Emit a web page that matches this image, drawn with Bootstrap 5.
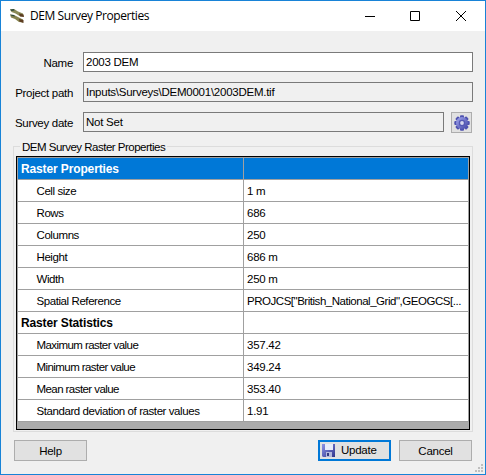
<!DOCTYPE html>
<html lang="en">
<head>
<meta charset="utf-8">
<meta name="viewport" content="width=device-width, initial-scale=1">
<title>DEM Survey Properties</title>
<link href="https://cdn.jsdelivr.net/npm/bootstrap@5.3.0/dist/css/bootstrap.min.css" rel="stylesheet">
<style>
body{font:11.5px/14px "Liberation Sans",Arial,sans-serif;color:#000;letter-spacing:-.42px;background:#f0f0f0;overflow:hidden}
.win{width:486px;height:475px;border:1px solid #1883d7;background:#f0f0f0}
.titlebar{height:30px;padding-left:8px;background:#fff}
.title-text{font:12px/16px "Open Sans",sans-serif;letter-spacing:-.43px;margin-left:5px}
.caption-btn{width:46px;height:29px}
.main-area{padding:21px 12px 0 12px}
.field-row{height:20px;margin-bottom:10px}
.field-row label{width:60px;margin-right:10px;text-align:right;padding-top:4px;letter-spacing:-.3px}
.form-control.field{height:20px;border:1px solid #7a7a7a;border-radius:0;padding:0 0 1px 2px;font-size:11.5px;line-height:14px;color:#000;background:#fff;letter-spacing:-.25px;min-width:0}
.form-control.field[readonly]{background:#f0f0f0}
.tool-btn{width:21px;height:21px;border:1px solid #adadad;background:#e1e1e1;margin:0 1px 0 7px;padding:0;border-radius:0}
.group{width:460px;height:290px;border:1px solid #dcdcdc;padding:0 2px}
.group legend{float:none;width:auto;font-size:11.5px;line-height:10px;height:9px;margin:0 0 5px 4px;padding:0 2px;color:#000;letter-spacing:-.5px}
.gridview{width:454px;height:274px;border:1px solid #000;background:#ababab}
.grid-body{border:1px solid #a0a0a0;border-bottom:0;width:452px}
.prop-row{height:22px;border-bottom:1px solid #a0a0a0;line-height:23px;background:#fff}
.prop-key{width:226px;border-right:1px solid #a0a0a0;padding-left:18.5px}
.prop-val{padding-left:3px;width:224px;white-space:nowrap;letter-spacing:-.26px}
.raster-name{letter-spacing:-.57px}
.wkt{letter-spacing:-.47px}
.head .prop-key{font-weight:700;font-size:12px;padding-left:3px;letter-spacing:-.13px}
.picked{background:#0078d7;color:#fff}
.btn.dlg{width:73px;height:21px;border:1px solid #adadad;border-radius:0;background:#e1e1e1;color:#000;padding:0;font-size:11.5px;line-height:20px;letter-spacing:-.25px}
.btn.primary-action{border:2px solid #0078d7;line-height:17px}
.save-icon{margin:0 5px 0 2px}
.actions{width:458px;margin:8px 0 0 1px}
.grip{right:2px;bottom:2px}
</style>
</head>
<body>
<div class="win position-relative">
  <header class="titlebar d-flex align-items-center">
    <svg width="16" height="16" viewBox="0 0 16 16"><path d="M1 1.500l4-.5 4 2.500 5 2 .5 3-4-.5-4-2.500-4-1.500z" fill="#8a8a58"/><path d="M1 6.500l4 .5 4 2 5 2.500v3l-4-.5-4-3-4-1.500z" fill="#85824e"/><path d="M1 1.500l4-.5.500 1.500-3 .5zM1 6.500l4 .5 1 1.500-3-.5z" fill="#2f4a3a"/><path d="M10 5.500l4.500 1 .5 2.500-4-.5zM10 11l4.500 1v3l-4-1.500z" fill="#5d3d20"/></svg>
    <span class="title-text">DEM Survey Properties</span>
    <div class="d-flex ms-auto">
      <svg class="caption-btn" viewBox="0 0 46 29"><path d="M18 14.500h10" stroke="#000"/></svg>
      <svg class="caption-btn" viewBox="0 0 46 29"><path d="M17.500 9.500h9v9h-9z" stroke="#000" fill="none"/></svg>
      <svg class="caption-btn" viewBox="0 0 46 29"><path d="M17 9l10 10M27 9l-10 10" stroke="#000"/></svg>
    </div>
  </header>
  <main class="main-area">
    <div class="field-row d-flex"><label class="flex-shrink-0 text-nowrap" for="n">Name</label><input id="n" class="form-control field" value="2003 DEM"></div>
    <div class="field-row d-flex"><label class="flex-shrink-0 text-nowrap" for="p">Project path</label><input id="p" class="form-control field" readonly value="Inputs\Surveys\DEM0001\2003DEM.tif"></div>
    <div class="field-row d-flex"><label class="flex-shrink-0 text-nowrap" for="d">Survey date</label><input id="d" class="form-control field" readonly value="Not Set">
      <button class="tool-btn d-flex flex-shrink-0 align-items-center justify-content-center" aria-label="Set date">
        <svg class="flex-shrink-0" width="16" height="16" viewBox="0 0 16 16"><defs><linearGradient id="gear" x2="1" y2="1"><stop stop-color="#a4a8f0"/><stop offset="1" stop-color="#4044a4"/></linearGradient></defs><g fill="#4e52b0"><g id="t"><rect x="6" y=".3" width="4" height="15.400" rx="1"/><rect x=".3" y="6" width="15.400" height="4" rx="1"/></g><use href="#t" transform="rotate(45 8 8)"/></g><circle cx="8" cy="8" r="6" fill="url(#gear)"/><circle cx="8" cy="8" r="3.200" fill="#5458b4"/><circle cx="8" cy="8" r="1.900" fill="#d4d6ee"/></svg>
      </button></div>
    <fieldset class="group">
      <legend>DEM Survey Raster Properties</legend>
      <div class="gridview"><div class="grid-body">
        <div class="prop-row head picked d-flex"><div class="prop-key">Raster Properties</div><div class="prop-val"></div></div>
        <div class="prop-row d-flex"><div class="prop-key">Cell size</div><div class="prop-val">1 m</div></div>
        <div class="prop-row d-flex"><div class="prop-key">Rows</div><div class="prop-val">686</div></div>
        <div class="prop-row d-flex"><div class="prop-key">Columns</div><div class="prop-val">250</div></div>
        <div class="prop-row d-flex"><div class="prop-key">Height</div><div class="prop-val">686 m</div></div>
        <div class="prop-row d-flex"><div class="prop-key">Width</div><div class="prop-val">250 m</div></div>
        <div class="prop-row d-flex"><div class="prop-key">Spatial Reference</div><div class="prop-val wkt">PROJCS["British_National_Grid",GEOGCS[...</div></div>
        <div class="prop-row head d-flex"><div class="prop-key">Raster Statistics</div><div class="prop-val"></div></div>
        <div class="prop-row d-flex"><div class="prop-key raster-name">Maximum raster value</div><div class="prop-val">357.42</div></div>
        <div class="prop-row d-flex"><div class="prop-key raster-name">Minimum raster value</div><div class="prop-val">349.24</div></div>
        <div class="prop-row d-flex"><div class="prop-key raster-name">Mean raster value</div><div class="prop-val">353.40</div></div>
        <div class="prop-row d-flex"><div class="prop-key">Standard deviation of raster values</div><div class="prop-val">1.91</div></div>
      </div></div>
    </fieldset>
    <div class="actions d-flex">
      <button class="btn dlg">Help</button>
      <button class="btn dlg primary-action ms-auto me-2 d-flex align-items-center">
        <svg width="14" height="14" viewBox="0 0 14 14" class="save-icon"><defs><linearGradient id="disk" x2="1" y2="1"><stop stop-color="#8c94e8"/><stop offset="1" stop-color="#30348c"/></linearGradient></defs><path d="M0 0h13v13H1l-1-1z" fill="url(#disk)"/><path d="M3 0h8v6H3z" fill="#e8ecfa"/><path d="M4 8h6v5H4z" fill="#b4b8dc"/><path d="M5 9h2v3H5z" fill="#353a80"/></svg>Update</button>
      <button class="btn dlg">Cancel</button>
    </div>
  </main>
  <svg class="grip position-absolute" width="8" height="8" viewBox="0 0 8 8" fill="#bfbfbf"><path d="M6 0h2v2H6zM3 3h2v2H3zM6 3h2v2H6zM0 6h2v2H0zM3 6h2v2H3zM6 6h2v2H6z"/></svg>
</div>
<script src="https://cdn.jsdelivr.net/npm/bootstrap@5.3.0/dist/js/bootstrap.bundle.min.js"></script>
</body>
</html>
